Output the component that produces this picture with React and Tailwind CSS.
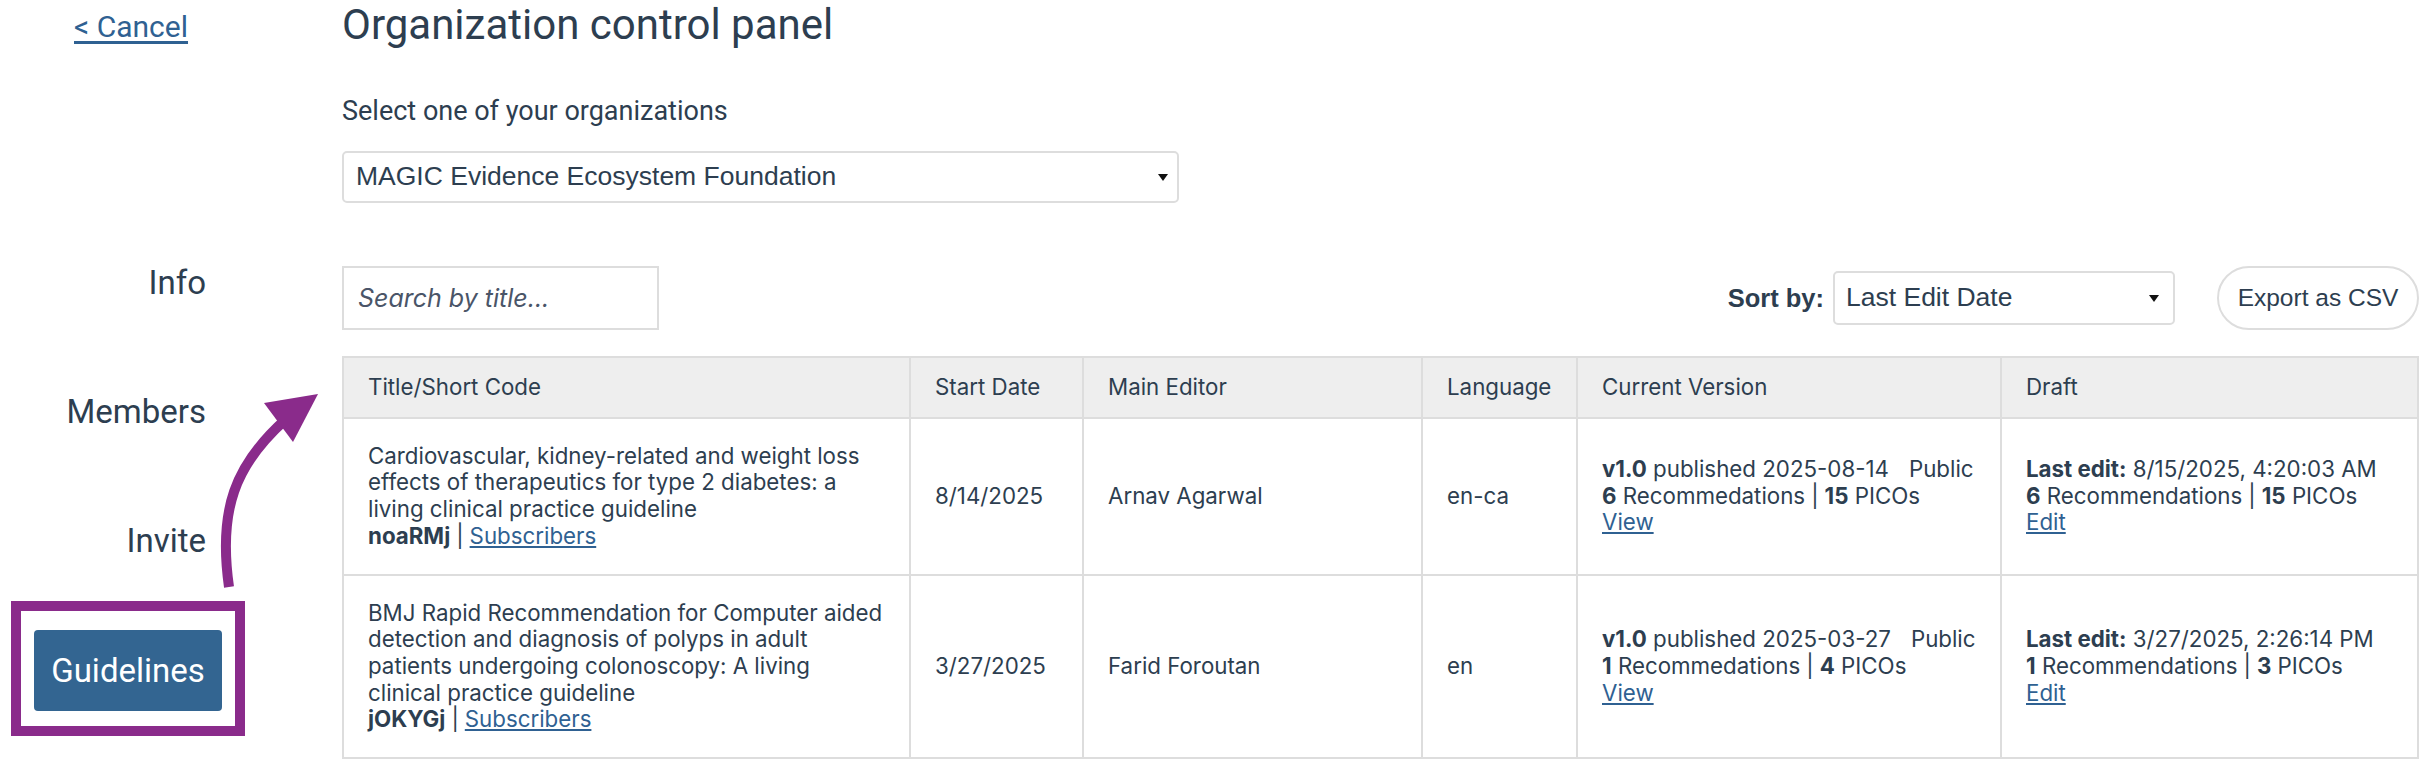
import React from 'react';

const rows = [
    {
        title: [
            'Cardiovascular, kidney-related and weight loss',
            'effects of therapeutics for type 2 diabetes: a',
            'living clinical practice guideline',
        ],
        code: 'noaRMj',
        start: '8/14/2025',
        editor: 'Arnav Agarwal',
        lang: 'en-ca',
        published: '2025-08-14',
        recs: '6',
        picos: '15',
        lastEdit: '8/15/2025, 4:20:03 AM',
        draftRecs: '6',
        draftPicos: '15',
    },
    {
        title: [
            'BMJ Rapid Recommendation for Computer aided',
            'detection and diagnosis of polyps in adult',
            'patients undergoing colonoscopy: A living',
            'clinical practice guideline',
        ],
        code: 'jOKYGj',
        start: '3/27/2025',
        editor: 'Farid Foroutan',
        lang: 'en',
        published: '2025-03-27',
        recs: '1',
        picos: '4',
        lastEdit: '3/27/2025, 2:26:14 PM',
        draftRecs: '1',
        draftPicos: '3',
    },
];

function Caret() {
    return (
        <svg width="10" height="7" viewBox="0 0 10 7" className="shrink-0">
            <path d="M0 0 H10 L5 7 Z" fill="#111" />
        </svg>
    );
}

function Sep() {
    return <span className="mx-[6px] text-[#2d3e50]">|</span>;
}

const cell = 'border-2 border-[#dddddd] pl-[24px] pr-[8px] py-[24px] align-middle';

export default function App() {
    return (
        <div className="relative min-h-[760px] bg-white text-[#2d3e50] overflow-hidden">
            <div className="flex">
                {/* Sidebar */}
                <aside className="w-[342px] shrink-0 font-['Roboto',sans-serif]">
                    <div className="pt-[13px] pl-[74px]">
                        <a href="#" className="text-[30px] leading-[28px] text-[#2f6192] underline underline-offset-[4px]">
                            &lt; Cancel
                        </a>
                    </div>
                    <nav className="mt-[219px] w-[206px] flex flex-col items-end gap-[89px] text-[33px] leading-[40px]">
                        <span>Info</span>
                        <span>Members</span>
                        <span>Invite</span>
                    </nav>
                    <div className="mt-[40px] ml-[11px] w-[234px] border-[10px] border-[#8a2b8b] pt-[19px] pb-[15px] px-[13px]">
                        <button className="w-full h-[81px] rounded-[4px] bg-[#336591] text-white text-[33px] leading-[40px]">
                            Guidelines
                        </button>
                    </div>
                </aside>

                {/* Main */}
                <main className="flex-1 pr-[10px]">
                    <h1 className="pt-[1px] font-['Roboto',sans-serif] text-[42px] leading-[48px]">
                        Organization control panel
                    </h1>
                    <div className="mt-[46px] font-['Roboto',sans-serif] text-[27px] leading-[32px]">
                        Select one of your organizations
                    </div>
                    <div className="mt-[24px] w-[837px] h-[52px] flex items-center justify-between pl-[12px] pr-[9px] border-2 border-[#dddddd] rounded-[5px] font-['Liberation_Sans',sans-serif] text-[26.5px]">
                        <span>MAGIC Evidence Ecosystem Foundation</span>
                        <Caret />
                    </div>

                    {/* Toolbar */}
                    <div className="mt-[63px] flex items-center justify-between">
                        <input
                            type="text"
                            placeholder="Search by title..."
                            className="w-[317px] h-[64px] border-2 border-[#dddddd] px-[14px] font-['Inter',sans-serif] text-[25px] outline-none placeholder:italic placeholder:text-[#4a5568]"
                        />
                        <div className="flex items-center font-['Liberation_Sans',sans-serif]">
                            <span className="font-bold mr-[9px] text-[25.5px]">Sort by:</span>
                            <div className="w-[342px] h-[54px] flex items-center justify-between pl-[11px] pr-[14px] border-2 border-[#dddddd] rounded-[5px] text-[26.5px]">
                                <span>Last Edit Date</span>
                                <Caret />
                            </div>
                            <button className="ml-[42px] w-[202px] h-[64px] rounded-full border-2 border-[#dddddd] bg-white text-[24.5px]">
                                Export as CSV
                            </button>
                        </div>
                    </div>

                    {/* Table */}
                    <table className="mt-[26px] w-[2075px] table-fixed border-collapse font-['Inter',sans-serif] text-[22.3px] leading-[26.7px]">
                        <colgroup>
                            <col className="w-[567px]" />
                            <col className="w-[173px]" />
                            <col className="w-[339px]" />
                            <col className="w-[155px]" />
                            <col className="w-[424px]" />
                            <col className="w-[417px]" />
                        </colgroup>
                        <thead>
                            <tr className="bg-[#eeeeee]">
                                {['Title/Short Code', 'Start Date', 'Main Editor', 'Language', 'Current Version', 'Draft'].map((h) => (
                                    <th key={h} className="border-2 border-[#dddddd] pl-[24px] pr-[8px] py-[16px] text-left font-normal align-middle whitespace-nowrap">
                                        {h}
                                    </th>
                                ))}
                            </tr>
                        </thead>
                        <tbody>
                            {rows.map((r) => (
                                <tr key={r.code}>
                                    <td className={cell + ' whitespace-nowrap'}>
                                        {r.title.map((line) => (
                                            <div key={line}>{line}</div>
                                        ))}
                                        <div>
                                            <span className="font-bold">{r.code}</span>
                                            <Sep />
                                            <a href="#" className="text-[#2f6192] underline">Subscribers</a>
                                        </div>
                                    </td>
                                    <td className={cell}>{r.start}</td>
                                    <td className={cell}>{r.editor}</td>
                                    <td className={cell}>{r.lang}</td>
                                    <td className={cell + ' whitespace-nowrap'}>
                                        <div>
                                            <span className="font-bold">v1.0</span> published {r.published}
                                            <span className="ml-[20px]">Public</span>
                                        </div>
                                        <div>
                                            <span className="font-bold">{r.recs}</span> Recommedations
                                            <Sep />
                                            <span className="font-bold">{r.picos}</span> PICOs
                                        </div>
                                        <a href="#" className="text-[#2f6192] underline">View</a>
                                    </td>
                                    <td className={cell + ' whitespace-nowrap'}>
                                        <div>
                                            <span className="font-bold">Last edit:</span> {r.lastEdit}
                                        </div>
                                        <div>
                                            <span className="font-bold">{r.draftRecs}</span> Recommendations
                                            <Sep />
                                            <span className="font-bold">{r.draftPicos}</span> PICOs
                                        </div>
                                        <a href="#" className="text-[#2f6192] underline">Edit</a>
                                    </td>
                                </tr>
                            ))}
                        </tbody>
                    </table>
                </main>
            </div>

            {/* Annotation arrow */}
            <svg className="absolute left-0 top-0 pointer-events-none" width="342" height="760" viewBox="0 0 342 760">
                <path d="M229 587 C218 510 235 465 285 420" fill="none" stroke="#8a2b8b" strokeWidth="10" />
                <polygon points="264,403 318,394 293,442" fill="#8a2b8b" />
            </svg>
        </div>
    );
}
